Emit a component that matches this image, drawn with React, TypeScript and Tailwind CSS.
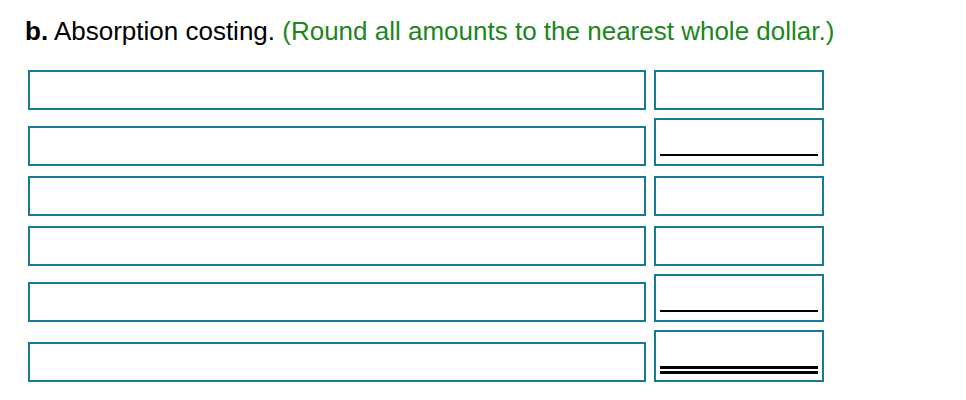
export default function App() {
  const rows: { mt: string; line: "none" | "single" | "double" }[] = [
    { mt: "mt-[24px]", line: "none" },
    { mt: "mt-[8px]", line: "single" },
    { mt: "mt-[10px]", line: "none" },
    { mt: "mt-[10px]", line: "none" },
    { mt: "mt-[8px]", line: "single" },
    { mt: "mt-[8px]", line: "double" },
  ];

  return (
    <div className="w-[966px] h-[400px] bg-white font-['Liberation_Sans',Arial,sans-serif]">
      <div className="pl-[25px] pt-[16px]">
        <p className="text-[26px] leading-[30px] text-black whitespace-nowrap">
          <span className="font-bold">b.</span> Absorption costing.{" "}
          <span className="text-[#1b861b]">(Round all amounts to the nearest whole dollar.)</span>
        </p>
      </div>

      <div className="pl-[28px] flex flex-col">
        {rows.map((row, i) => (
          <div key={i} className={`${row.mt} flex items-end gap-[8px]`}>
            <div className="w-[618px] h-[40px] border-2 border-[#187b96] bg-white" />
            {row.line === "none" && (
              <div className="w-[170px] h-[40px] border-2 border-[#187b96] bg-white" />
            )}
            {row.line === "single" && (
              <div className="w-[170px] border-2 border-[#187b96] bg-white px-[4px] pb-[8px]">
                <div className="h-[34px]" />
                <div className="h-[2px] bg-black" />
              </div>
            )}
            {row.line === "double" && (
              <div className="w-[170px] border-2 border-[#187b96] bg-white px-[4px] pb-[6px]">
                <div className="h-[34px]" />
                <div className="h-[3px] bg-black" />
                <div className="h-[2px]" />
                <div className="h-[3px] bg-black" />
              </div>
            )}
          </div>
        ))}
      </div>
    </div>
  );
}
